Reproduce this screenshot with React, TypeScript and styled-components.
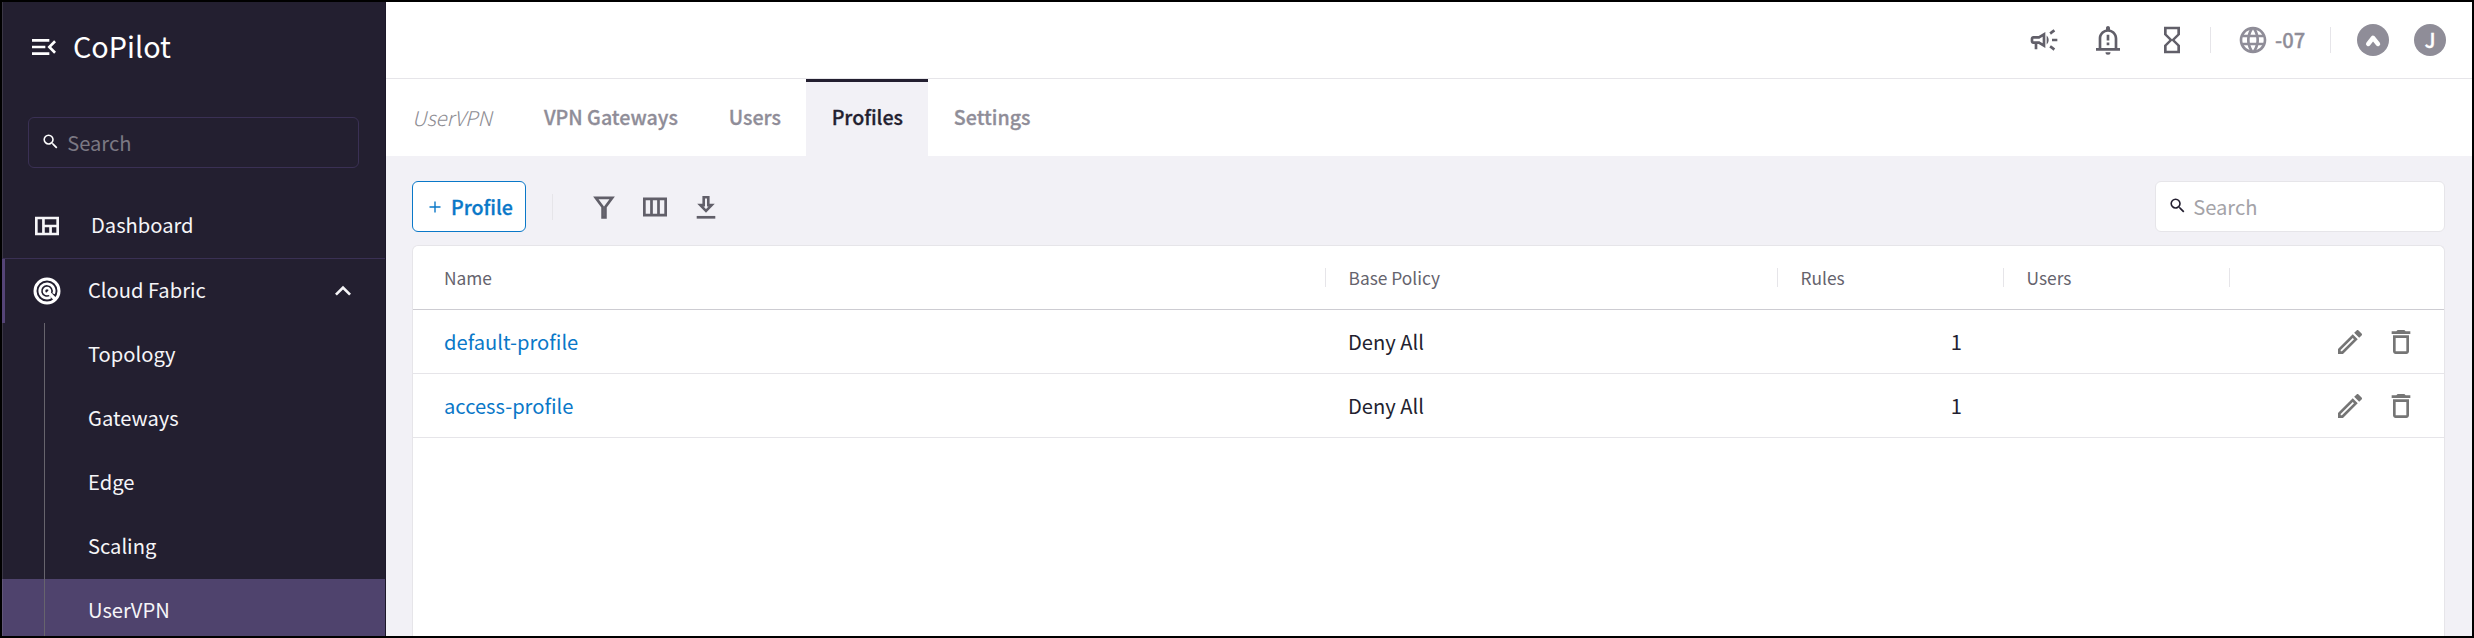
import React from "react";
import styled, { createGlobalStyle, css } from "styled-components";
import {
  MdDeleteOutline,
  MdExpandLess,
  MdHourglassEmpty,
  MdLanguage,
  MdMenuOpen,
  MdOutlineCampaign,
  MdOutlineEdit,
  MdOutlineViewQuilt,
  MdSearch,
} from "react-icons/md";

const colors = {
  night: "#231f30",
  purple: "#4f436d",
  canvas: "#f2f1f6",
  line: "#e6e5e9",
  icon: "#615f69",
  muted: "#8f8d98",
  blue: "#0a78c8",
};

const GlobalStyle = createGlobalStyle`
  * { box-sizing: border-box; }
  body {
    margin: 0;
    font-family: "Noto Sans CJK JP", "Noto Sans", sans-serif;
    font-size: 20.15px;
    line-height: 30px;
    color: ${colors.night};
  }
  svg { display: block; flex: none; }
`;

const semibold = css`
  font-weight: 500;
  font-size: 19.65px;
  -webkit-text-stroke: 0.3px currentColor;
`;

const Frame = styled.div`
  display: flex;
  height: 638px;
  border: 2px solid #000;
  overflow: hidden;
`;

/* Sidebar */

const Sidebar = styled.aside`
  flex: none;
  width: 384px;
  background: ${colors.night};
  color: #fff;
  border-right: 1px solid #1c1829;
  box-shadow: inset 1px 0 0 #3b3746;
`;

const Brand = styled.div`
  display: flex;
  align-items: center;
  gap: 13px;
  height: 90px;
  padding-left: 26px;
`;

const BrandName = styled.span`
  font-size: 28.8px;
  line-height: 40px;
  padding-bottom: 2px;
`;

const SearchBox = styled.label<{ $dark?: boolean }>`
  display: flex;
  align-items: center;
  gap: ${(p) => (p.$dark ? 7 : 6)}px;
  height: 51px;
  padding-left: 12px;
  border-radius: 6px;
  border: 1px solid ${(p) => (p.$dark ? "#3a3054" : colors.line)};
  background: ${(p) => (p.$dark ? "transparent" : "#fff")};
  color: ${(p) => (p.$dark ? "#fff" : colors.night)};
  ${(p) => (p.$dark ? "margin: 25px 26px 0 26px;" : "width: 290px; margin-left: auto;")}

  svg {
    margin-bottom: 1px;
  }
`;

const SearchHint = styled.span<{ $dark?: boolean }>`
  color: ${(p) => (p.$dark ? "#7b7883" : "#a4a3a8")};
`;

const NavRow = styled.div`
  display: flex;
  align-items: center;
  height: 64px;
  padding-bottom: 1px;
  color: #f6f5f8;

  span {
    padding-bottom: 2px;
  }
`;

const DashboardRow = styled(NavRow)`
  margin-top: 26px;
  padding-left: 29px;
  gap: 28px;
`;

const GroupRow = styled(NavRow)`
  height: 65px;
  padding: 0 26px 0 31px;
  gap: 27px;
  border-top: 1px solid #3a3054;
  box-shadow: inset 3px 0 0 #554477;

  svg:last-child {
    margin-left: auto;
  }
`;

const SubNav = styled.nav`
  height: 320px;
`;

const SubItem = styled.a<{ $active?: boolean }>`
  display: flex;
  height: 64px;
  padding-left: 42px;
  background: ${(p) => (p.$active ? colors.purple : "transparent")};
  color: #f6f5f8;
  box-shadow: ${(p) => (p.$active ? "inset 1px 0 0 #625779" : "none")};

  span {
    display: flex;
    align-items: center;
    padding: 0 0 3px 43px;
    border-left: 1px solid #67646d;
  }
`;

/* Main area */

const Main = styled.main`
  flex: 1;
  min-width: 0;
  display: flex;
  flex-direction: column;
  background: ${colors.canvas};
`;

const TopBar = styled.header`
  flex: none;
  display: flex;
  align-items: center;
  justify-content: flex-end;
  height: 77px;
  padding-right: 26px;
  background: #fff;
  border-bottom: 1px solid ${colors.line};
  color: ${colors.icon};
`;

const TopIcons = styled.div`
  display: flex;
  gap: 32px;
`;

const Divider = styled.i<{ $left: number; $right: number }>`
  width: 1px;
  height: 26px;
  margin: 0 ${(p) => p.$right}px 0 ${(p) => p.$left}px;
  background: ${colors.line};
`;

const Zone = styled.div`
  display: flex;
  align-items: center;
  gap: 6px;
  width: 67px;
  color: ${colors.muted};
  white-space: nowrap;
  ${semibold}
  font-size: 20.15px;
`;

const Bubble = styled.div`
  display: flex;
  align-items: center;
  justify-content: center;
  width: 32px;
  height: 32px;
  border-radius: 50%;
  background: ${colors.muted};
  color: #fff;
  ${semibold}
  font-size: 20.15px;

  & + & {
    margin-left: 25px;
  }
`;

const Tabs = styled.nav`
  flex: none;
  display: flex;
  height: 77px;
  background: #fff;
  padding-left: 26px;
`;

const TabTitle = styled.span`
  display: flex;
  align-items: center;
  width: 106.5px;
  padding-bottom: 2px;
  font-style: italic;
  font-weight: 300;
  font-size: 20.4px;
  color: #8e8d93;
`;

const Tab = styled.a<{ $active?: boolean }>`
  display: flex;
  align-items: center;
  padding: 0 25.4px 2px;
  ${semibold}
  color: ${(p) => (p.$active ? colors.night : colors.muted)};
  background: ${(p) => (p.$active ? colors.canvas : "transparent")};
  box-shadow: ${(p) => (p.$active ? `inset 0 3px 0 ${colors.night}` : "none")};
`;

const Toolbar = styled.div`
  flex: none;
  display: flex;
  align-items: center;
  height: 51px;
  margin: 25px 27px 13px 26px;
  color: ${colors.icon};
`;

const AddButton = styled.button`
  display: flex;
  align-items: center;
  gap: 10px;
  width: 114px;
  height: 51px;
  padding: 0 0 0 16px;
  border: 1px solid ${colors.blue};
  border-radius: 6px;
  background: #fff;
  color: ${colors.blue};
  font-family: inherit;
  line-height: inherit;
  ${semibold}
`;

const ToolIcons = styled.div`
  display: flex;
  gap: 19px;
`;

const Table = styled.section`
  flex: 1;
  margin: 0 27px 0 26px;
  background: #fff;
  border: 1px solid ${colors.line};
  border-bottom: 0;
  border-radius: 6px 6px 0 0;
`;

const Row = styled.div<{ $head?: boolean }>`
  display: grid;
  grid-template-columns: 912px 452px 226px 226px 1fr;
  align-items: center;
  height: 64px;
  border-bottom: 1px solid ${(p) => (p.$head ? "#cdccd2" : colors.line)};
  ${(p) => p.$head && `font-size: 17.35px; color: #65636d;`}
`;

const HeadCell = styled.div`
  display: flex;
  align-items: center;
  height: 19px;
  padding-left: 22.5px;

  &:first-child {
    padding-left: 31px;
  }

  & + & {
    border-left: 1px solid ${colors.line};
  }
`;

const Cell = styled.div<{ $link?: boolean; $number?: boolean }>`
  padding: 0 41px 0 ${(p) => (p.$link ? 31 : 23)}px;
  color: ${(p) => (p.$link ? colors.blue : colors.night)};
  text-align: ${(p) => (p.$number ? "right" : "left")};
`;

const Actions = styled.div`
  display: flex;
  justify-content: flex-end;
  gap: 19px;
  padding: 1px 27px 0 0;
  color: #757575;
`;

/* Icons */

const FabricIcon = () => (
  <svg width="28" height="28" viewBox="0 0 28 28" fill="none" stroke="#fff">
    <circle cx="14" cy="14" r="12" strokeWidth="3" />
    <path d="M17.6 20.2A7.2 7.2 0 1 1 20.6 16.8" strokeWidth="2.7" />
    <circle cx="14" cy="14" r="3" strokeWidth="2.5" />
    <path d="M14.5 14.5L22 22" strokeWidth="3.2" />
  </svg>
);

const BellIcon = () => (
  <svg width="32" height="32" viewBox="0 0 24 24" fill="currentColor">
    <path
      fillRule="evenodd"
      d="M10.1 21.1a1.9 1.9 0 0 0 3.8 0zM12 1.5c-.83 0-1.5.67-1.5 1.5v1.1C7.3 4.8 5 7.5 5 10.8V18H3v2h18v-2h-2v-7.2c0-3.3-2.3-6-5.5-6.7V3c0-.83-.67-1.5-1.5-1.5zM12 5.8c2.8 0 5 2.3 5 5V18H7v-7.2c0-2.7 2.2-5 5-5zM11 8h2v4.3h-2zm0 5.9h2v2h-2z"
    />
  </svg>
);

const CaretIcon = () => (
  <svg width="32" height="32" viewBox="0 0 32 32" fill="none" stroke="#fff">
    <path d="M11.3 19.9L16 13.9L20.9 19.9" strokeWidth="4.6" strokeLinecap="round" strokeLinejoin="round" />
  </svg>
);

const PlusIcon = () => (
  <svg width="12" height="12" viewBox="0 0 12 12" fill="none" stroke="currentColor" strokeWidth="1.4">
    <path d="M6 .5v11M.5 6h11" />
  </svg>
);

const FilterIcon = () => (
  <svg width="32" height="32" viewBox="0 0 32 32" fill="none" stroke="currentColor" strokeWidth="2.7">
    <path d="M7.8 6.8H24.2L17.4 16V26.3H14.6V16Z" />
  </svg>
);

const ColumnsIcon = () => (
  <svg width="32" height="32" viewBox="0 0 32 32" fill="none" stroke="currentColor" strokeWidth="2.7">
    <path d="M5.35 7.9H26.65V24.2H5.35ZM12.5 8V24M19.5 8V24" />
  </svg>
);

const DownloadIcon = () => (
  <svg width="32" height="32" viewBox="0 0 32 32" fill="none" stroke="currentColor">
    <path d="M13.7 6.2H18.3V14.1H21.7L16 20L10.3 14.1H13.7Z" strokeWidth="2.6" />
    <path d="M6.7 26.3H25.3" strokeWidth="2.7" />
  </svg>
);

const subItems = ["Topology", "Gateways", "Edge", "Scaling", "UserVPN"];
const tabs = ["VPN Gateways", "Users", "Profiles", "Settings"];
const profiles = [
  { name: "default-profile", policy: "Deny All", rules: 1 },
  { name: "access-profile", policy: "Deny All", rules: 1 },
];

export default function App() {
  return (
    <Frame>
      <GlobalStyle />
      <Sidebar>
        <Brand>
          <MdMenuOpen size={32} />
          <BrandName>CoPilot</BrandName>
        </Brand>
        <SearchBox $dark>
          <MdSearch size={19.2} />
          <SearchHint $dark>Search</SearchHint>
        </SearchBox>
        <DashboardRow>
          <MdOutlineViewQuilt size={32} />
          <span>Dashboard</span>
        </DashboardRow>
        <GroupRow>
          <FabricIcon />
          <span>Cloud Fabric</span>
          <MdExpandLess size={32} />
        </GroupRow>
        <SubNav>
          {subItems.map((item) => (
            <SubItem key={item} $active={item === "UserVPN"}>
              <span>{item}</span>
            </SubItem>
          ))}
        </SubNav>
      </Sidebar>
      <Main>
        <TopBar>
          <TopIcons>
            <MdOutlineCampaign size={32} />
            <BellIcon />
            <MdHourglassEmpty size={32} />
          </TopIcons>
          <Divider $left={22} $right={26} />
          <Zone>
            <MdLanguage size={32} />
            <span>-07</span>
          </Zone>
          <Divider $left={26} $right={26} />
          <Bubble>
            <CaretIcon />
          </Bubble>
          <Bubble>J</Bubble>
        </TopBar>
        <Tabs>
          <TabTitle>UserVPN</TabTitle>
          {tabs.map((tab) => (
            <Tab key={tab} $active={tab === "Profiles"}>
              {tab}
            </Tab>
          ))}
        </Tabs>
        <Toolbar>
          <AddButton>
            <PlusIcon />
            Profile
          </AddButton>
          <Divider $left={26} $right={35} />
          <ToolIcons>
            <FilterIcon />
            <ColumnsIcon />
            <DownloadIcon />
          </ToolIcons>
          <SearchBox>
            <MdSearch size={19.2} />
            <SearchHint>Search</SearchHint>
          </SearchBox>
        </Toolbar>
        <Table>
          <Row $head>
            <HeadCell>Name</HeadCell>
            <HeadCell>Base Policy</HeadCell>
            <HeadCell>Rules</HeadCell>
            <HeadCell>Users</HeadCell>
            <HeadCell />
          </Row>
          {profiles.map((profile) => (
            <Row key={profile.name}>
              <Cell $link>{profile.name}</Cell>
              <Cell>{profile.policy}</Cell>
              <Cell $number>{profile.rules}</Cell>
              <Cell />
              <Actions>
                <MdOutlineEdit size={32} />
                <MdDeleteOutline size={32} />
              </Actions>
            </Row>
          ))}
        </Table>
      </Main>
    </Frame>
  );
}
